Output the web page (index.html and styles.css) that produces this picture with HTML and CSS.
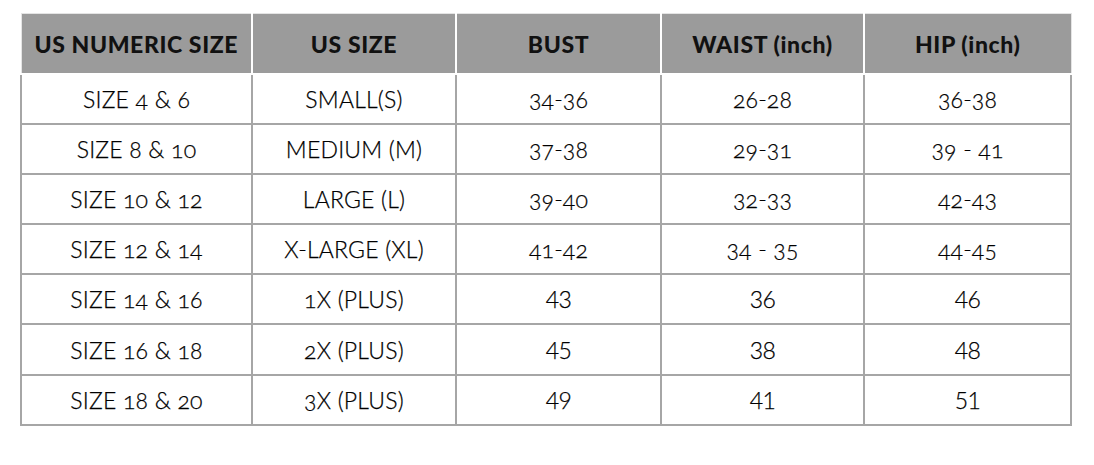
FILE: index.html
```html
<!DOCTYPE html>
<html>
<head>
<meta charset="utf-8">
<link rel="stylesheet" href="styles.css">
</head>
<body>
<table class="chart">
  <colgroup>
    <col class="c1"><col class="c2"><col class="c3"><col class="c4"><col class="c5">
  </colgroup>
  <thead>
    <tr><th>US NUMERIC SIZE</th><th>US SIZE</th><th>BUST</th><th>WAIST (inch)</th><th>HIP (inch)</th></tr>
  </thead>
  <tbody>
    <tr><td>SIZE 4 &amp; 6</td><td>SMALL(S)</td><td>34-36</td><td>26-28</td><td>36-38</td></tr>
    <tr><td>SIZE 8 &amp; 10</td><td>MEDIUM (M)</td><td>37-38</td><td>29-31</td><td>39 - 41</td></tr>
    <tr><td>SIZE 10 &amp; 12</td><td>LARGE (L)</td><td>39-40</td><td>32-33</td><td>42-43</td></tr>
    <tr><td>SIZE 12 &amp; 14</td><td>X-LARGE (XL)</td><td>41-42</td><td>34 - 35</td><td>44-45</td></tr>
    <tr><td>SIZE 14 &amp; 16</td><td>1X (PLUS)</td><td class="lin">43</td><td class="lin">36</td><td class="lin">46</td></tr>
    <tr><td>SIZE 16 &amp; 18</td><td>2X (PLUS)</td><td class="lin">45</td><td class="lin">38</td><td class="lin">48</td></tr>
    <tr><td>SIZE 18 &amp; 20</td><td>3X (PLUS)</td><td class="lin">49</td><td class="lin">41</td><td class="lin">51</td></tr>
  </tbody>
</table>
</body>
</html>
```
FILE: styles.css
```css
html, body {
  margin: 0;
  background: #fff;
}
body {
  padding: 13px 0 0 20px;
  font-family: "Lato", "Open Sans", sans-serif;
  color: #000;
}
.chart {
  border-collapse: collapse;
  table-layout: fixed;
  width: 1050px;
}
.c1 { width: 231px; }
.c2 { width: 204px; }
.c3 { width: 205px; }
.c4 { width: 203px; }
.c5 { width: 207px; }
.chart th {
  background: #9b9b9b;
  height: 59px;
  border: 2px solid #fff;
  border-top: 1px solid #e4e4e4;
  font-weight: 900;
  font-size: 23px;
  letter-spacing: 0.6px;
  color: #111;
  padding: 0;
  text-align: center;
}
.chart th:first-child { border-left: 1px solid #e4e4e4; }
.chart th:last-child { border-right: 1px solid #e4e4e4; }
.chart td {
  height: 48.1px;
  border: 2px solid #a6a6a6;
  font-size: 23px;
  font-weight: 300;
  letter-spacing: 0.2px;
  text-align: center;
  padding: 0;
  font-variant-numeric: oldstyle-nums;
  -webkit-text-stroke: 0.25px #000;
}
.chart td.lin {
  font-variant-numeric: lining-nums;
  font-size: 23px;
  letter-spacing: -0.5px;
}
```
